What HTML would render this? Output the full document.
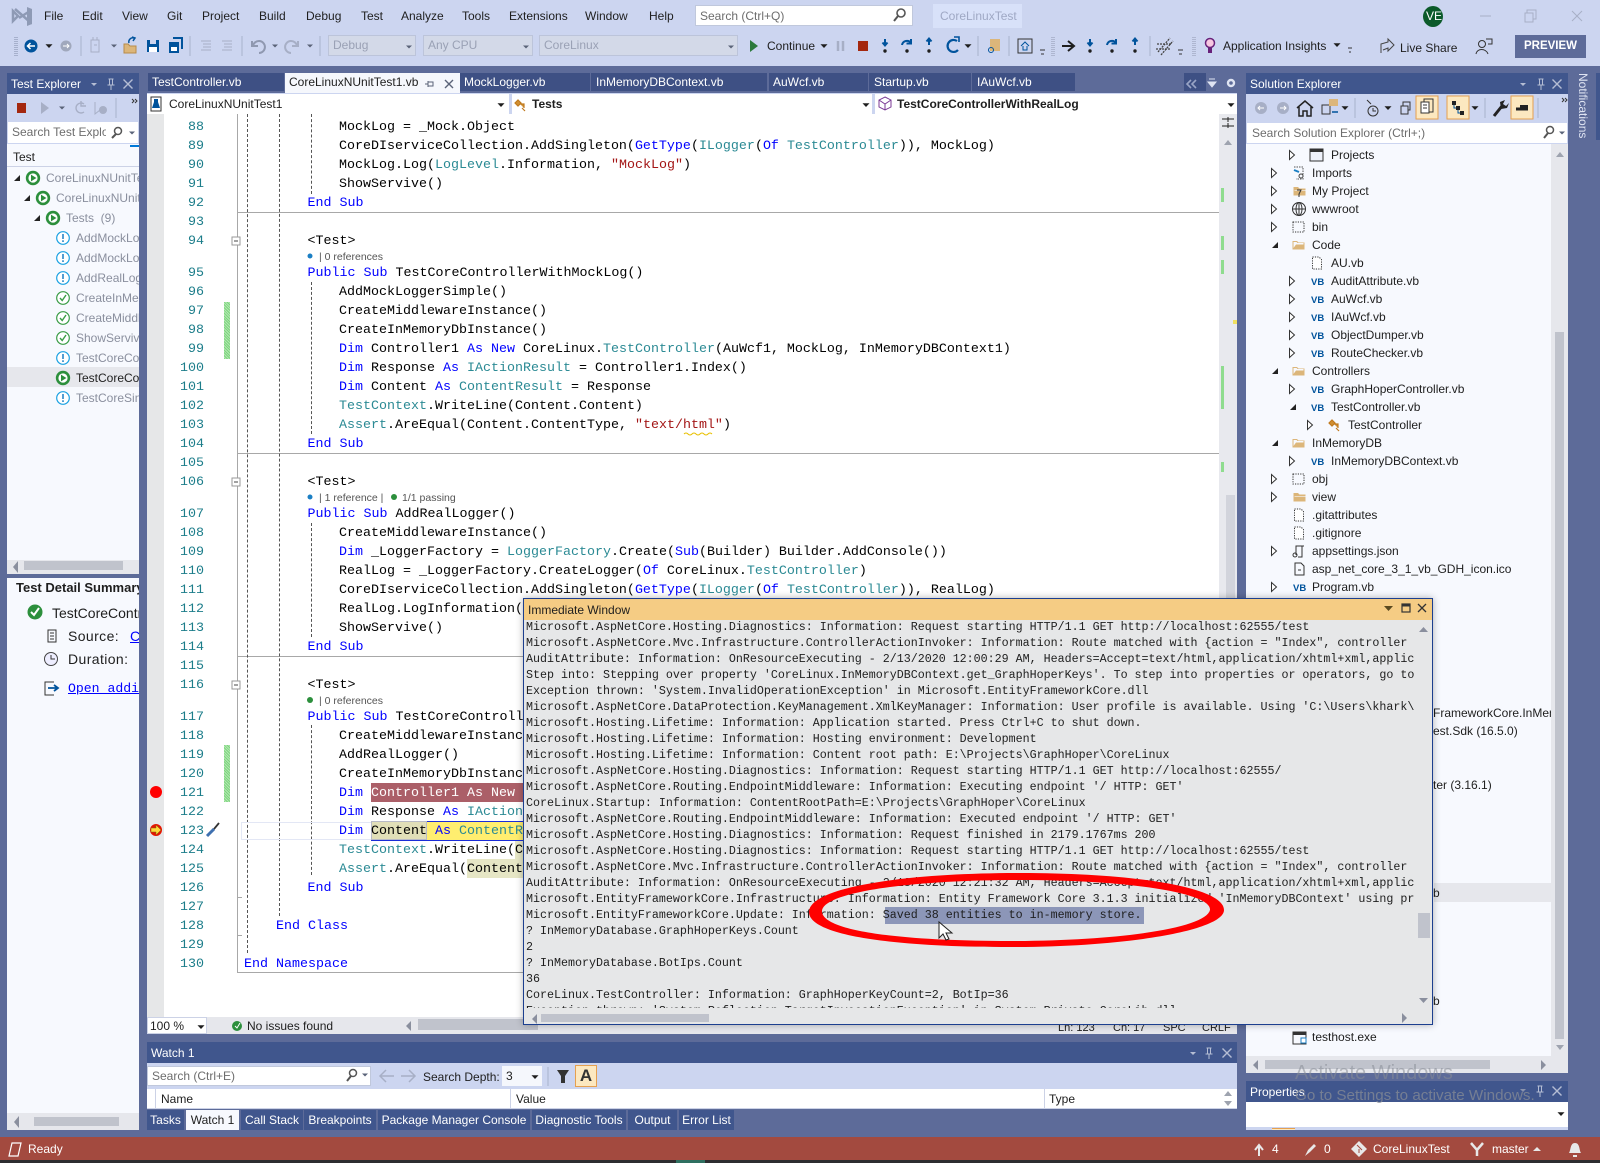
<!DOCTYPE html>
<html>
<head>
<meta charset="utf-8">
<title>CoreLinuxTest - Visual Studio</title>
<style>
html,body{margin:0;padding:0}
body{position:relative;width:1600px;height:1163px;overflow:hidden;background:#5d6b99;font:12px "Liberation Sans",sans-serif;color:#1e1e1e}
.a{position:absolute}
.t{position:absolute;white-space:pre;font:12px/16px "Liberation Sans",sans-serif;color:#1e1e1e}
.w{color:#fff}
.g{color:#8a8f9e}
.tab{position:absolute;top:73px;height:18px;background:#3e5084}
.c{position:absolute;white-space:pre;font:13.33px/19px "Liberation Mono",monospace;color:#000}
.n{position:absolute;left:164px;width:40px;text-align:right;font:13.33px/19px "Liberation Mono",monospace;color:#1c7d8a}
.x1{left:244px}.x2{left:276px}.x3{left:307.5px}.x4{left:339px}
.c b{font-weight:normal;color:#0000ff}
.c i{font-style:normal;color:#2b8a94}
.c u{text-decoration:none;color:#a31515}
.lens{position:absolute;white-space:pre;font:10.5px/12px "Liberation Sans",sans-serif;color:#555}
.clip{position:absolute;overflow:hidden}
.dd{position:absolute;top:35px;height:21px;background:#d3d9e8;border:1px solid #bcc4da;box-sizing:border-box;color:#9aa1b5;padding:2px 0 0 4px;line-height:15px}
.btab{position:absolute;top:1110px;height:20px;background:#40568d;color:#fff;font:12px/20px "Liberation Sans",sans-serif;text-align:center;white-space:pre}
.gb{position:absolute;left:224px;width:6px;background:repeating-linear-gradient(45deg,#7fd47f 0 1px,#b0e8b0 1px 2px)}
</style>
</head>
<body>
<!-- top chrome -->
<div class="a" style="left:0;top:0;width:1600px;height:66px;background:#ccd5f0"></div>
<div class="t" style="left:44px;top:8px">File</div>
<div class="t" style="left:82px;top:8px">Edit</div>
<div class="t" style="left:122px;top:8px">View</div>
<div class="t" style="left:167px;top:8px">Git</div>
<div class="t" style="left:202px;top:8px">Project</div>
<div class="t" style="left:259px;top:8px">Build</div>
<div class="t" style="left:306px;top:8px">Debug</div>
<div class="t" style="left:361px;top:8px">Test</div>
<div class="t" style="left:401px;top:8px">Analyze</div>
<div class="t" style="left:462px;top:8px">Tools</div>
<div class="t" style="left:509px;top:8px">Extensions</div>
<div class="t" style="left:585px;top:8px">Window</div>
<div class="t" style="left:649px;top:8px">Help</div>
<div class="a" style="left:695px;top:5px;width:218px;height:21px;background:#fff;border:1px solid #c0c8dc;box-sizing:border-box"></div>
<div class="t" style="left:700px;top:8px;color:#6d6d6d">Search (Ctrl+Q)</div>
<div class="a" style="left:933px;top:4px;width:89px;height:24px;background:#d8e1f9"></div>
<div class="t" style="left:940px;top:8px;color:#9fa8c4">CoreLinuxTest</div>
<div class="a" style="left:1423px;top:6px;width:20px;height:21px;border-radius:50%;background:#0b5a2a"></div>
<div class="t w" style="left:1426px;top:8px">VE</div>
<div class="dd" style="left:328px;width:88px">Debug</div>
<div class="dd" style="left:423px;width:110px">Any CPU</div>
<div class="dd" style="left:539px;width:199px">CoreLinux</div>
<div class="t" style="left:767px;top:38px">Continue</div>
<div class="t" style="left:1223px;top:38px">Application Insights</div>
<div class="t" style="left:1400px;top:40px">Live Share</div>
<div class="a" style="left:1515px;top:35px;width:71px;height:23px;background:#5d6b99;color:#fff;font:bold 11.5px/23px 'Liberation Sans',sans-serif;text-align:center">PREVIEW</div>

<!-- test explorer -->
<div class="a" style="left:7px;top:73px;width:132px;height:21px;background:#40568d"></div>
<div class="t w" style="left:11px;top:76px">Test Explorer</div>
<div class="a" style="left:7px;top:94px;width:132px;height:28px;background:#ccd5f0"></div>
<div class="a" style="left:7px;top:122px;width:132px;height:22px;background:#ccd5f0"></div>
<div class="a" style="left:8px;top:122px;width:130px;height:21px;background:#fff"></div>
<div class="t" style="left:12px;top:124px;color:#6d6d6d;width:94px;overflow:hidden">Search Test Explor</div>
<div class="a" style="left:7px;top:144px;width:132px;height:416px;background:#f7f9fe"></div>
<div class="a" style="left:130px;top:145px;width:9px;height:2px;background:#0078d7"></div>
<div class="a" style="left:7px;top:166px;width:132px;height:1px;background:#ccd2e6"></div>
<div class="t" style="left:13px;top:149px">Test</div>
<div class="a" style="left:7px;top:367px;width:132px;height:20px;background:#e6e7ec"></div>
<div class="clip" style="left:7px;top:144px;width:132px;height:416px">
<div class="t g" style="left:39px;top:26px">CoreLinuxNUnitTest1</div>
<div class="t g" style="left:49px;top:46px">CoreLinuxNUnitTest1</div>
<div class="t g" style="left:59px;top:66px">Tests  (9)</div>
<div class="t g" style="left:69px;top:86px">AddMockLoggerSimple</div>
<div class="t g" style="left:69px;top:106px">AddMockLogger</div>
<div class="t g" style="left:69px;top:126px">AddRealLogger</div>
<div class="t g" style="left:69px;top:146px">CreateInMemoryDb</div>
<div class="t g" style="left:69px;top:166px">CreateMiddleware</div>
<div class="t g" style="left:69px;top:186px">ShowServive</div>
<div class="t g" style="left:69px;top:206px">TestCoreController</div>
<div class="t" style="left:69px;top:226px">TestCoreController</div>
<div class="t g" style="left:69px;top:246px">TestCoreSingleton</div>
</div>
<div class="a" style="left:7px;top:560px;width:132px;height:14px;background:#e6e7ec"></div>
<div class="a" style="left:24px;top:561px;width:99px;height:9px;background:#c0c3cc"></div>
<div class="a" style="left:7px;top:578px;width:132px;height:552px;background:#f7f9fe"></div>
<div class="clip" style="left:7px;top:578px;width:132px;height:130px">
<div class="t" style="left:9px;top:2px;font:bold 13px/16px 'Liberation Sans',sans-serif">Test Detail Summary</div>
<div class="t" style="left:45px;top:27px;font:14px/16px 'Liberation Sans',sans-serif">TestCoreController</div>
<div class="t" style="left:61px;top:50px;font:14px/16px 'Liberation Sans',sans-serif;letter-spacing:.4px">Source:</div>
<div class="t" style="left:123px;top:50px;font:14px/16px 'Liberation Sans',sans-serif;color:#00f;text-decoration:underline">CoreLinux</div>
<div class="t" style="left:61px;top:73px;font:14px/16px 'Liberation Sans',sans-serif;letter-spacing:.4px">Duration:</div>
<div class="t" style="left:61px;top:103px;font:13.17px/16px 'Liberation Mono',monospace;color:#00f;text-decoration:underline">Open additional output</div>
</div>
<div class="a" style="left:7px;top:1113px;width:132px;height:17px;background:#e6e7ec"></div>
<div class="a" style="left:34px;top:1117px;width:85px;height:9px;background:#c0c3cc"></div>

<!-- tabs -->
<div class="tab" style="left:148px;width:136px"></div>
<div class="a" style="left:285px;top:73px;width:175px;height:20px;background:#f5f7fc"></div>
<div class="tab" style="left:460px;width:130px"></div>
<div class="tab" style="left:591px;width:176px"></div>
<div class="tab" style="left:769px;width:99px"></div>
<div class="tab" style="left:869px;width:102px"></div>
<div class="tab" style="left:972px;width:103px"></div>
<div class="tab" style="left:1184px;width:22px"></div>
<div class="t w" style="left:152px;top:74px">TestController.vb</div>
<div class="t" style="left:289px;top:74px">CoreLinuxNUnitTest1.vb</div>
<div class="t w" style="left:464px;top:74px">MockLogger.vb</div>
<div class="t w" style="left:596px;top:74px">InMemoryDBContext.vb</div>
<div class="t w" style="left:773px;top:74px">AuWcf.vb</div>
<div class="t w" style="left:874px;top:74px">Startup.vb</div>
<div class="t w" style="left:977px;top:74px">IAuWcf.vb</div>

<!-- nav bar -->
<div class="a" style="left:147px;top:93px;width:1090px;height:21px;background:#ccd5f0"></div>
<div class="a" style="left:147px;top:94px;width:362px;height:20px;background:#fff"></div>
<div class="a" style="left:512px;top:94px;width:360px;height:20px;background:#fff"></div>
<div class="a" style="left:875px;top:94px;width:362px;height:20px;background:#fff"></div>
<div class="t" style="left:169px;top:96px">CoreLinuxNUnitTest1</div>
<div class="t" style="left:532px;top:96px;font-weight:bold">Tests</div>
<div class="t" style="left:897px;top:96px;font-weight:bold">TestCoreControllerWithRealLog</div>

<!-- editor -->
<div class="a" style="left:147px;top:114px;width:17px;height:903px;background:#e6e7e8"></div>
<div class="a" style="left:164px;top:114px;width:1055px;height:903px;background:#fff"></div>
<div class="a" style="left:1219px;top:114px;width:18px;height:903px;background:#e8e9ee"></div>
<div class="a" style="left:1226px;top:495px;width:9px;height:105px;background:#d2d4dc"></div>
<div class="gb" style="top:302px;height:57px"></div>
<div class="gb" style="top:745px;height:57px"></div>
<div class="a" style="left:1221px;top:188px;width:3px;height:14px;background:#8fdc8f"></div>
<div class="a" style="left:1221px;top:236px;width:3px;height:14px;background:#8fdc8f"></div>
<div class="a" style="left:1221px;top:260px;width:3px;height:14px;background:#8fdc8f"></div>
<div class="a" style="left:1221px;top:366px;width:3px;height:43px;background:#8fdc8f"></div>
<div class="a" style="left:1221px;top:462px;width:3px;height:10px;background:#8fdc8f"></div>
<div class="a" style="left:1233px;top:320px;width:4px;height:4px;background:#f0e060"></div>

<div class="a" style="left:237px;top:114px;width:1px;height:858px;background:#a8a8a8"></div>
<div class="a" style="left:237px;top:972px;width:290px;height:1px;background:#a8a8a8"></div>
<div class="a" style="left:237px;top:212px;width:982px;height:1px;background:#a8a8a8"></div>
<div class="a" style="left:237px;top:453px;width:982px;height:1px;background:#a8a8a8"></div>
<div class="a" style="left:237px;top:656px;width:982px;height:1px;background:#a8a8a8"></div>
<div class="a" style="left:238px;top:897px;width:4px;height:1px;background:#a8a8a8"></div>
<div class="a" style="left:238px;top:935px;width:4px;height:1px;background:#a8a8a8"></div>
<div class="a" style="left:247px;top:114px;height:839px;border-left:1px dashed #555"></div>
<div class="a" style="left:279px;top:114px;height:802px;border-left:1px dashed #555"></div>
<div class="a" style="left:311px;top:114px;height:80px;border-left:1px dashed #555"></div>
<div class="a" style="left:311px;top:282px;height:152px;border-left:1px dashed #555"></div>
<div class="a" style="left:311px;top:523px;height:114px;border-left:1px dashed #555"></div>
<div class="a" style="left:311px;top:725px;height:150px;border-left:1px dashed #555"></div>

<div class="a" style="left:371px;top:783px;width:152px;height:19px;background:#ab5f68"></div>
<div class="a" style="left:241px;top:822px;width:282px;height:18px;border:1px solid #e3e7f5;box-sizing:border-box"></div>
<div class="a" style="left:371px;top:821px;width:152px;height:20px;background:#ffee6f"></div>
<div class="a" style="left:427px;top:821px;width:96px;height:1px;background:#1a2cd8"></div>
<div class="a" style="left:371px;top:840px;width:152px;height:1px;background:#1a2cd8"></div>
<div class="a" style="left:371px;top:821px;width:56px;height:19px;background:#e1dfb8;border:1px solid #b8bac6;box-sizing:border-box"></div>
<div class="a" style="left:515px;top:841px;width:8px;height:18px;background:#e6e6c5"></div>
<div class="a" style="left:467px;top:859px;width:56px;height:19px;background:#e6e6c5"></div>

<div class="a" style="left:0;top:1px">
<div class="n" style="top:117px">88</div><div class="n" style="top:136px">89</div><div class="n" style="top:155px">90</div><div class="n" style="top:174px">91</div><div class="n" style="top:193px">92</div><div class="n" style="top:212px">93</div><div class="n" style="top:231px">94</div>
<div class="n" style="top:263px">95</div><div class="n" style="top:282px">96</div><div class="n" style="top:301px">97</div><div class="n" style="top:320px">98</div><div class="n" style="top:339px">99</div><div class="n" style="top:358px">100</div><div class="n" style="top:377px">101</div><div class="n" style="top:396px">102</div><div class="n" style="top:415px">103</div><div class="n" style="top:434px">104</div><div class="n" style="top:453px">105</div><div class="n" style="top:472px">106</div>
<div class="n" style="top:504px">107</div><div class="n" style="top:523px">108</div><div class="n" style="top:542px">109</div><div class="n" style="top:561px">110</div><div class="n" style="top:580px">111</div><div class="n" style="top:599px">112</div><div class="n" style="top:618px">113</div><div class="n" style="top:637px">114</div><div class="n" style="top:656px">115</div><div class="n" style="top:675px">116</div>

<div class="c x4" style="top:117px">MockLog = _Mock.Object</div>
<div class="c x4" style="top:136px">CoreDIserviceCollection.AddSingleton(<b>GetType</b>(<i>ILogger</i>(<b>Of</b> <i>TestController</i>)), MockLog)</div>
<div class="c x4" style="top:155px">MockLog.Log(<i>LogLevel</i>.Information, <u>"MockLog"</u>)</div>
<div class="c x4" style="top:174px">ShowServive()</div>
<div class="c x3" style="top:193px"><b>End Sub</b></div>
<div class="c x3" style="top:231px">&lt;Test&gt;</div>
<div class="c x3" style="top:263px"><b>Public Sub</b> TestCoreControllerWithMockLog()</div>
<div class="c x4" style="top:282px">AddMockLoggerSimple()</div>
<div class="c x4" style="top:301px">CreateMiddlewareInstance()</div>
<div class="c x4" style="top:320px">CreateInMemoryDbInstance()</div>
<div class="c x4" style="top:339px"><b>Dim</b> Controller1 <b>As New</b> CoreLinux.<i>TestController</i>(AuWcf1, MockLog, InMemoryDBContext1)</div>
<div class="c x4" style="top:358px"><b>Dim</b> Response <b>As</b> <i>IActionResult</i> = Controller1.Index()</div>
<div class="c x4" style="top:377px"><b>Dim</b> Content <b>As</b> <i>ContentResult</i> = Response</div>
<div class="c x4" style="top:396px"><i>TestContext</i>.WriteLine(Content.Content)</div>
<div class="c x4" style="top:415px"><i>Assert</i>.AreEqual(Content.ContentType, <u>"text/html"</u>)</div>
<div class="c x3" style="top:434px"><b>End Sub</b></div>
<div class="c x3" style="top:472px">&lt;Test&gt;</div>
<div class="c x3" style="top:504px"><b>Public Sub</b> AddRealLogger()</div>
<div class="c x4" style="top:523px">CreateMiddlewareInstance()</div>
<div class="c x4" style="top:542px"><b>Dim</b> _LoggerFactory = <i>LoggerFactory</i>.Create(<b>Sub</b>(Builder) Builder.AddConsole())</div>
<div class="c x4" style="top:561px">RealLog = _LoggerFactory.CreateLogger(<b>Of</b> CoreLinux.<i>TestController</i>)</div>
<div class="c x4" style="top:580px">CoreDIserviceCollection.AddSingleton(<b>GetType</b>(<i>ILogger</i>(<b>Of</b> <i>TestController</i>)), RealLog)</div>
<div class="c x4" style="top:599px">RealLog.LogInformation(</div>
<div class="c x4" style="top:618px">ShowServive()</div>
<div class="c x3" style="top:637px"><b>End Sub</b></div>
<div class="c x3" style="top:675px">&lt;Test&gt;</div>
</div>

<div class="a" style="left:0;top:2px">
<div class="n" style="top:706px">117</div><div class="n" style="top:725px">118</div><div class="n" style="top:744px">119</div><div class="n" style="top:763px">120</div><div class="n" style="top:782px">121</div><div class="n" style="top:801px">122</div><div class="n" style="top:820px">123</div><div class="n" style="top:839px">124</div><div class="n" style="top:858px">125</div><div class="n" style="top:877px">126</div><div class="n" style="top:896px">127</div><div class="n" style="top:915px">128</div><div class="n" style="top:934px">129</div><div class="n" style="top:953px">130</div>
<div class="c x3" style="top:706px"><b>Public Sub</b> TestCoreControllerWithRealLog()</div>
<div class="c x4" style="top:725px">CreateMiddlewareInstance()</div>
<div class="c x4" style="top:744px">AddRealLogger()</div>
<div class="c x4" style="top:763px">CreateInMemoryDbInstance()</div>
<div class="c x4" style="top:782px"><b>Dim</b> <span style="color:#fff">Controller1 As New</span></div>
<div class="c x4" style="top:801px"><b>Dim</b> Response <b>As</b> <i>IActionResult</i></div>
<div class="c x4" style="top:820px"><b>Dim</b> Content <b>As</b> <i>ContentResult</i></div>
<div class="c x4" style="top:839px"><i>TestContext</i>.WriteLine(Content.Content)</div>
<div class="c x4" style="top:858px"><i>Assert</i>.AreEqual(Content.ContentType</div>
<div class="c x3" style="top:877px"><b>End Sub</b></div>
<div class="c x2" style="top:915px"><b>End Class</b></div>
<div class="c x1" style="top:953px"><b>End Namespace</b></div>
</div>

<div class="lens" style="left:319px;top:251px">| 0 references</div>
<div class="lens" style="left:319px;top:492px">| 1 reference |</div>
<div class="lens" style="left:402px;top:492px">1/1 passing</div>
<div class="lens" style="left:319px;top:695px">| 0 references</div>

<!-- editor status -->
<div class="a" style="left:147px;top:1017px;width:1090px;height:17px;background:#e6e7ec"></div>
<div class="a" style="left:147px;top:1017px;width:60px;height:17px;background:#fff;border:1px solid #ccd2e6;box-sizing:border-box"></div>
<div class="t" style="left:150px;top:1018px">100 %</div>
<div class="t" style="left:247px;top:1018px">No issues found</div>
<div class="a" style="left:418px;top:1019px;width:120px;height:11px;background:#c0c3cc"></div>
<div class="t" style="left:1058px;top:1020px;font-size:11px">Ln: 123</div>
<div class="t" style="left:1113px;top:1020px;font-size:11px">Ch: 17</div>
<div class="t" style="left:1163px;top:1020px;font-size:11px">SPC</div>
<div class="t" style="left:1202px;top:1020px;font-size:11px">CRLF</div>

<!-- watch -->
<div class="a" style="left:147px;top:1042px;width:1090px;height:21px;background:#40568d"></div>
<div class="t w" style="left:151px;top:1045px">Watch 1</div>
<div class="a" style="left:147px;top:1063px;width:1090px;height:26px;background:#ccd5f0"></div>
<div class="a" style="left:147px;top:1066px;width:224px;height:20px;background:#fff;border:1px solid #c0c8dc;box-sizing:border-box"></div>
<div class="t" style="left:152px;top:1068px;color:#6d6d6d">Search (Ctrl+E)</div>
<div class="t" style="left:423px;top:1069px">Search Depth:</div>
<div class="a" style="left:502px;top:1066px;width:40px;height:20px;background:#f5f7fc"></div>
<div class="t" style="left:506px;top:1068px">3</div>
<div class="a" style="left:575px;top:1065px;width:22px;height:22px;background:#fce8c0;border:1px solid #e5a050;box-sizing:border-box;text-align:center;font:bold 17px/20px 'Liberation Sans',sans-serif;color:#333">A</div>
<div class="a" style="left:147px;top:1089px;width:1090px;height:20px;background:#fff"></div>
<div class="a" style="left:155px;top:1089px;width:1px;height:20px;background:#ccd2e6"></div>
<div class="a" style="left:510px;top:1089px;width:1px;height:20px;background:#ccd2e6"></div>
<div class="a" style="left:1044px;top:1089px;width:1px;height:20px;background:#ccd2e6"></div>
<div class="a" style="left:147px;top:1108px;width:1090px;height:1px;background:#ccd2e6"></div>
<div class="t" style="left:161px;top:1091px">Name</div>
<div class="t" style="left:516px;top:1091px">Value</div>
<div class="t" style="left:1049px;top:1091px">Type</div>
<div class="btab" style="left:147px;width:37px">Tasks</div>
<div class="btab" style="left:186px;width:53px;background:#f7f9fe;color:#1e1e1e">Watch 1</div>
<div class="btab" style="left:241px;width:62px">Call Stack</div>
<div class="btab" style="left:304px;width:72px">Breakpoints</div>
<div class="btab" style="left:378px;width:152px">Package Manager Console</div>
<div class="btab" style="left:532px;width:94px">Diagnostic Tools</div>
<div class="btab" style="left:628px;width:49px">Output</div>
<div class="btab" style="left:679px;width:55px">Error List</div>

<!-- solution explorer -->
<div class="a" style="left:1246px;top:73px;width:322px;height:21px;background:#40568d"></div>
<div class="t w" style="left:1250px;top:76px">Solution Explorer</div>
<div class="a" style="left:1246px;top:94px;width:322px;height:29px;background:#ccd5f0"></div>
<div class="a" style="left:1246px;top:123px;width:322px;height:21px;background:#ccd5f0"></div>
<div class="a" style="left:1247px;top:123px;width:320px;height:20px;background:#fff"></div>
<div class="t" style="left:1252px;top:125px;color:#6d6d6d">Search Solution Explorer (Ctrl+;)</div>
<div class="a" style="left:1246px;top:144px;width:305px;height:912px;background:#f7f9fe"></div>
<div class="a" style="left:1551px;top:144px;width:17px;height:929px;background:#e6e7ec"></div>
<div class="a" style="left:1555px;top:332px;width:9px;height:707px;background:#c0c3cc"></div>
<div class="a" style="left:1246px;top:1056px;width:322px;height:17px;background:#e6e7ec"></div>
<div class="a" style="left:1265px;top:1060px;width:225px;height:9px;background:#c0c3cc"></div>
<div class="a" style="left:1434px;top:883px;width:117px;height:19px;background:#e6e7ec"></div>
<div class="t" style="left:1331px;top:147px">Projects</div>
<div class="t" style="left:1312px;top:165px">Imports</div>
<div class="t" style="left:1312px;top:183px">My Project</div>
<div class="t" style="left:1312px;top:201px">wwwroot</div>
<div class="t" style="left:1312px;top:219px">bin</div>
<div class="t" style="left:1312px;top:237px">Code</div>
<div class="t" style="left:1331px;top:255px">AU.vb</div>
<div class="t" style="left:1331px;top:273px">AuditAttribute.vb</div>
<div class="t" style="left:1331px;top:291px">AuWcf.vb</div>
<div class="t" style="left:1331px;top:309px">IAuWcf.vb</div>
<div class="t" style="left:1331px;top:327px">ObjectDumper.vb</div>
<div class="t" style="left:1331px;top:345px">RouteChecker.vb</div>
<div class="t" style="left:1312px;top:363px">Controllers</div>
<div class="t" style="left:1331px;top:381px">GraphHoperController.vb</div>
<div class="t" style="left:1331px;top:399px">TestController.vb</div>
<div class="t" style="left:1348px;top:417px">TestController</div>
<div class="t" style="left:1312px;top:435px">InMemoryDB</div>
<div class="t" style="left:1331px;top:453px">InMemoryDBContext.vb</div>
<div class="t" style="left:1312px;top:471px">obj</div>
<div class="t" style="left:1312px;top:489px">view</div>
<div class="t" style="left:1312px;top:507px">.gitattributes</div>
<div class="t" style="left:1312px;top:525px">.gitignore</div>
<div class="t" style="left:1312px;top:543px">appsettings.json</div>
<div class="t" style="left:1312px;top:561px">asp_net_core_3_1_vb_GDH_icon.ico</div>
<div class="t" style="left:1312px;top:579px">Program.vb</div>
<div class="clip" style="left:1433px;top:700px;width:118px;height:100px">
<div class="t" style="left:0;top:5px">FrameworkCore.InMemory</div>
<div class="t" style="left:0;top:23px">est.Sdk (16.5.0)</div>
<div class="t" style="left:0;top:77px">ter (3.16.1)</div>
</div>
<div class="t" style="left:1433px;top:885px">b</div>
<div class="t" style="left:1433px;top:993px">b</div>
<div class="t" style="left:1312px;top:1029px">testhost.exe</div>
<div class="a" style="left:1246px;top:1081px;width:322px;height:21px;background:#40568d"></div>
<div class="t w" style="left:1250px;top:1084px">Properties</div>
<div class="a" style="left:1246px;top:1102px;width:322px;height:25px;background:#fff"></div>
<div class="a" style="left:1246px;top:1127px;width:322px;height:3px;background:#ccd5f0"></div>
<div class="a" style="left:1272px;top:1128px;width:23px;height:2px;background:#fce8c0;border-top:1px solid #e5a050;box-sizing:border-box"></div>
<div class="t" style="left:1577px;top:107px;transform-origin:0 0;transform:translate(0,-34px) rotate(90deg) translate(0,-14px);color:#dfe4f2">Notifications</div>
<div class="a" style="left:1596px;top:73px;width:4px;height:67px;background:#40568d"></div>

<!-- status bar -->
<div class="a" style="left:0;top:1137px;width:1600px;height:23px;background:#a34a3f"></div>
<div class="a" style="left:0;top:1160px;width:1600px;height:3px;background:#2d2d30"></div>
<div class="a" style="left:676px;top:1160px;width:29px;height:3px;background:#2f6f60"></div>
<div class="t w" style="left:28px;top:1141px">Ready</div>
<div class="t w" style="left:1272px;top:1141px">4</div>
<div class="t w" style="left:1324px;top:1141px">0</div>
<div class="t w" style="left:1373px;top:1141px">CoreLinuxTest</div>
<div class="t w" style="left:1492px;top:1141px">master</div>

<!-- icons -->
<svg class="a" style="left:0;top:0" width="1600" height="1163" viewBox="0 0 1600 1163" xmlns="http://www.w3.org/2000/svg">
<defs>
<g id="pg"><circle r="7.2" fill="#2c8f3c"/><circle r="4.6" fill="#fff"/><path d="M-2-3.4L3.4 0-2 3.4Z" fill="#2c8f3c"/></g>
<g id="inf"><circle r="6.3" fill="#fff" stroke="#1ba1e2" stroke-width="1.2"/><path d="M0-4V1M0 2.2V4" stroke="#1b7fc4" stroke-width="1.5"/></g>
<g id="ok"><circle r="6.3" fill="#fff" stroke="#3a9c46" stroke-width="1.2"/><path d="M-3 0L-.8 2.5 3-3" fill="none" stroke="#3a9c46" stroke-width="1.4"/></g>
<path id="ex" d="M-2.5-4.5L2.5 0-2.5 4.5Z" fill="#fff" stroke="#333" stroke-width="1"/>
<path id="ed" d="M3-3V3H-3Z" fill="#222"/>
<g id="fo"><path d="M-6.500-4H-2L-.5-2.500H5.500V4.500H-6.500Z" fill="#dcb67a"/><path d="M-5.500-.5H5.500" stroke="#f7f9fe" stroke-width="1" opacity=".6"/></g>
<g id="fop"><path d="M-6.500-4H-2L-.5-2.500H5.500V4.500H-6.500Z" fill="#dcb67a"/><path d="M-5.500-3H-2.500L-1.500-2H4.500V-.5H-3L-5.500 3Z" fill="#f7f9fe"/></g>
<rect id="fd" x="-6" y="-5" width="11" height="10" fill="none" stroke="#333" stroke-dasharray="1.200 1.200"/>
<path id="fl" d="M-4.500-6H2L4.500-3.500V6H-4.500Z" fill="#fff" stroke="#333" stroke-dasharray="1.200 1.200"/>
<g id="cl"><path d="M-5-1L-2-4 1-1-2 2ZM0 0H4V4M2 4L5 7" fill="#d08f33" stroke="#c07a1e" stroke-width="1.200"/></g>
<path id="cd" d="M-3.500-1.800H3.500L0 2Z" fill="#1e1e1e"/>
<path id="cg" d="M-3-1.500H3L0 1.500Z" fill="#5a6378"/>
<g id="pin"><path d="M-2.500-5H2.500M-1.500-5V1M1.500-5V1M-3.500 1H3.500M0 1V6" stroke="#b5bdd4" fill="none" stroke-width="1"/></g>
<path id="xx" d="M-4.500-4.500L4.500 4.500M4.500-4.500L-4.500 4.500" stroke="#b5bdd4" stroke-width="1.400"/>
<g id="step"><path d="M0-7V-1M-2.500-3.500L0-.5 2.500-3.500" fill="none" stroke="#00539c" stroke-width="2"/><circle cy="5" r="1.700" fill="#1e1e1e"/></g>
<g id="over"><path d="M-5-1A5 5 0 0 1 4-3M4-7V-2.500H-.5" fill="none" stroke="#00539c" stroke-width="2"/><circle cy="5" r="1.700" fill="#1e1e1e"/></g>
<g id="out"><path d="M0-1V-7M-2.500-4.500L0-7.500 2.500-4.500" fill="none" stroke="#00539c" stroke-width="2"/><circle cy="5" r="1.700" fill="#1e1e1e"/></g>
</defs>

<!-- logo -->
<path d="M13 11L18 16 13 21ZM15 9L30 22V11L19 18" fill="none" stroke="#8e9ab5" stroke-width="2.500"/>
<path d="M27 7L32 9V24L27 26Z" fill="#8e9ab5"/>
<circle cx="901" cy="13" r="4" fill="none" stroke="#555" stroke-width="1.600"/><path d="M898 16L894 21" stroke="#555" stroke-width="2"/>
<!-- window controls -->
<path d="M1480 16H1491" stroke="#a7afc6"/><rect x="1525" y="13" width="8" height="9" fill="none" stroke="#a7afc6"/><path d="M1527 13V10H1536V19H1533" fill="none" stroke="#a7afc6"/><path d="M1572 11L1582 21M1582 11L1572 21" stroke="#a7afc6"/>

<!-- toolbar row -->
<path d="M15 37V56M17 37V56" stroke="#7f8aa8" stroke-dasharray="1 1"/>
<circle cx="31" cy="46" r="6.500" fill="#00539c"/><path d="M35 46H28M30.500 43L27.500 46 30.500 49" fill="none" stroke="#fff" stroke-width="1.500"/>
<use href="#cd" x="49" y="46"/>
<circle cx="66" cy="46" r="5.500" fill="#a0a8bc"/><path d="M63 46H69M67 44L69 46 67 48" fill="none" stroke="#fff"/>
<path d="M81 36V56M190 36V56M242 36V56M320 36V56" stroke="#a9b2cb"/>
<path d="M91 40H99V52H91Z" fill="none" stroke="#a7afc6"/><path d="M93 37V40M97 37V40M94 45H97" stroke="#a7afc6"/><use href="#cg" x="114" y="46"/>
<path d="M124 44H128L130 46H136V53H124Z" fill="#dcb67a" stroke="#b78c4a"/><path d="M129 43A4 4 0 0 1 134 38M132 37L135 38 133 41" fill="none" stroke="#00539c" stroke-width="1.500"/>
<path d="M147 40H159V52H147Z" fill="#00539c"/><rect x="150" y="40" width="6" height="4" fill="#ccd5f0"/><rect x="149" y="47" width="8" height="5" fill="#fff"/>
<path d="M169 42H179V53H169Z" fill="#00539c"/><path d="M173 38H182V49" fill="none" stroke="#00539c" stroke-width="2"/><rect x="171" y="47" width="6" height="4" fill="#fff"/>
<path d="M201 41H211M203 44H211M203 47H211M201 50H211M222 41H232M224 44H232M224 47H232M222 50H232" stroke="#a7afc6"/>
<path d="M252 41V46H258M253 46A6 6 0 1 1 259 53" fill="none" stroke="#8f98b0" stroke-width="2"/><use href="#cg" x="275" y="46"/>
<path d="M298 41V46H292M297 46A6 6 0 1 0 291 53" fill="none" stroke="#a7afc6" stroke-width="2"/><use href="#cg" x="310" y="46"/>
<use href="#cg" x="409" y="47"/><use href="#cg" x="526" y="47"/><use href="#cg" x="731" y="47"/>
<path d="M750 40L758 46 750 52Z" fill="#2c7a3c"/>
<use href="#cd" x="824" y="46"/>
<path d="M838 41V51M843 41V51" stroke="#a7afc6" stroke-width="2.500"/>
<rect x="858" y="41" width="10" height="10" fill="#a4280f"/>
<use href="#step" x="885" y="46"/><use href="#over" x="907" y="46"/><use href="#out" x="929" y="46"/>
<path d="M957 41A6 6 0 1 0 958 50" fill="none" stroke="#00539c" stroke-width="2.200"/><path d="M954 37H959V42" fill="none" stroke="#00539c" stroke-width="1.600"/><use href="#cd" x="968" y="46"/>
<path d="M978 36V56M1009 36V56M1150 36V56" stroke="#a9b2cb"/>
<rect x="990" y="39" width="10" height="12" fill="#dcb67a"/><circle cx="991" cy="50" r="2.500" fill="none" stroke="#00539c"/>
<rect x="1018" y="39" width="14" height="14" fill="none" stroke="#333"/><path d="M1021 46L1025 42 1029 46M1023 46V50H1027V46" fill="none" stroke="#00539c"/>
<path d="M1040 50H1045M1041 54H1044" stroke="#333"/><path d="M1052 37V56M1054 37V56M1193 37V56M1195 37V56" stroke="#8f98b0" stroke-dasharray="1 1"/>
<path d="M1062 46H1073M1068 41L1074 46 1068 51" fill="none" stroke="#1e1e1e" stroke-width="2"/>
<use href="#step" x="1090" y="46"/><use href="#over" x="1112" y="46"/><use href="#out" x="1135" y="46"/>
<path d="M1158 52L1170 38M1161 55L1173 41M1157 44H1172M1156 49H1171" stroke="#444" stroke-width="1.300" stroke-dasharray="2 1"/>
<path d="M1178 50H1183M1179 54H1182" stroke="#333"/>
<circle cx="1210" cy="43" r="4.500" fill="#f7c7e0" stroke="#68217a" stroke-width="1.500"/><path d="M1208 48H1212V53H1208Z" fill="#68217a"/>
<use href="#cd" x="1337" y="45"/><path d="M1348 48H1352M1349 52H1351" stroke="#333"/>
<path d="M1381 53V44L1388 42V39L1394 45 1388 51V48L1383 50" fill="none" stroke="#444"/>
<circle cx="1482" cy="44" r="3.500" fill="none" stroke="#333"/><path d="M1476 54C1477 48 1486 48 1488 54" fill="none" stroke="#333"/><path d="M1486 39H1492V44H1488" fill="none" stroke="#333"/>

<!-- test explorer -->
<path d="M91 83H97L94 86Z" fill="#b5bdd4"/><use href="#pin" x="111" y="84"/><use href="#xx" x="128" y="84"/>
<rect x="17" y="103" width="9" height="10" fill="#a4280f"/>
<path d="M41 102L49 108 41 114Z" fill="#a7afc6"/><use href="#cg" x="62" y="108"/>
<path d="M84 104A5 5 0 1 0 84 112M81 101V106H86" fill="none" stroke="#a7afc6" stroke-width="1.400"/>
<path d="M95 102V114L100 110" fill="none" stroke="#a7afc6"/><circle cx="103" cy="110" r="4" fill="#a7afc6"/>
<path d="M116 98V118" stroke="#a9b2cb"/>
<path d="M132 99L134 101 132 103M135 99L137 101 135 103" stroke="#333" fill="none"/>
<circle cx="118" cy="131" r="3.500" fill="none" stroke="#555" stroke-width="1.500"/><path d="M116 134L112 138" stroke="#555" stroke-width="2"/><use href="#cg" x="132" y="133"/>
<use href="#ed" x="17" y="178"/><use href="#pg" x="33" y="178"/>
<use href="#ed" x="27" y="198"/><use href="#pg" x="43" y="198"/>
<use href="#ed" x="37" y="218"/><use href="#pg" x="53" y="218"/>
<use href="#inf" x="63" y="238"/><use href="#inf" x="63" y="258"/><use href="#inf" x="63" y="278"/>
<use href="#ok" x="63" y="298"/><use href="#ok" x="63" y="318"/><use href="#ok" x="63" y="338"/>
<use href="#inf" x="63" y="358"/><use href="#pg" x="63" y="378"/><use href="#inf" x="63" y="398"/>
<path d="M18 561L13 567 18 573Z" fill="#8a8f9e"/>
<circle cx="35" cy="612" r="7.500" fill="#2c8f3c"/><path d="M31 612L34 615 39 608" fill="none" stroke="#fff" stroke-width="2"/>
<path d="M48 630H56V642H48ZM50 633H54M50 636H54M50 639H54" fill="none" stroke="#333"/>
<circle cx="51" cy="659" r="6.500" fill="#eef" stroke="#444"/><path d="M51 655V659H55" fill="none" stroke="#333"/>
<path d="M54 682H45V695H54" fill="none" stroke="#333"/><path d="M48 688H57M54 685L58 688 54 691" stroke="#00539c" fill="none" stroke-width="1.800"/>
<path d="M19 1116L14 1122 19 1128Z" fill="#8a8f9e"/>

<!-- tabs row icons -->
<path d="M425 84H428M428 81V87M428 82H433V86H428" fill="none" stroke="#5a6378"/>
<path d="M445 80L453 88M453 80L445 88" stroke="#5a6378" stroke-width="1.400"/>
<path d="M1191 80L1187 84 1191 88M1196 80L1192 84 1196 88" fill="none" stroke="#9aa5c6" stroke-width="1.600"/>
<path d="M1209 79H1215M1208 82H1216L1212 87Z" fill="#dfe4f2" stroke="#dfe4f2"/>
<circle cx="1231" cy="83" r="3" fill="none" stroke="#dfe4f2" stroke-width="2.400"/>

<!-- nav icons -->
<path d="M151 97H161V111H151Z" fill="#fff" stroke="#333"/><path d="M154 99H158V102L160 108H152L154 102Z" fill="#00539c"/>
<use href="#cl" x="520" y="104"/>
<path d="M885 97L891 100V107L885 110 879 107V100Z" fill="#fff" stroke="#7b3a96"/><path d="M879 100L885 104 891 100M885 104V110" fill="none" stroke="#7b3a96"/>
<use href="#cd" x="501" y="105"/><use href="#cd" x="866" y="105"/><use href="#cd" x="1231" y="105"/>

<!-- editor icons -->
<rect x="232" y="237" width="8" height="8" fill="#fff" stroke="#999"/><path d="M234 241H238" stroke="#444"/>
<rect x="232" y="478" width="8" height="8" fill="#fff" stroke="#999"/><path d="M234 482H238" stroke="#444"/>
<rect x="232" y="681" width="8" height="8" fill="#fff" stroke="#999"/><path d="M234 685H238" stroke="#444"/>
<circle cx="156" cy="792" r="6" fill="#f00"/>
<circle cx="156" cy="830" r="6" fill="#e51400"/><path d="M151 828H156V825L161 830 156 835V832H151Z" fill="#ffd83a" stroke="#7a6a10" stroke-width=".5"/>
<path d="M207 836L214 829" stroke="#3e70b0" stroke-width="3"/><path d="M214 829L219 823" stroke="#333" stroke-width="1.800"/>
<path d="M1222 119H1234M1222 126H1234M1228 117V122M1228 123V128" stroke="#222"/>
<path d="M1224 145L1228 140 1232 145Z" fill="#9ea3af"/>
<circle cx="310" cy="256" r="2.500" fill="#1b7fc4"/><circle cx="310" cy="497" r="2.500" fill="#1b7fc4"/><circle cx="394" cy="497" r="3" fill="#2c8f3c"/><circle cx="310" cy="700" r="3" fill="#2c8f3c"/>
<path d="M684 434q2-2 4 0t4 0 4 0 4 0 4 0 4 0 4 0" fill="none" stroke="#e8c000" stroke-width="1"/>
<circle cx="237" cy="1026" r="5" fill="#2c8f3c"/><path d="M235 1026L237 1028 240 1023" stroke="#fff" fill="none"/>
<use href="#cd" x="201" y="1027"/>
<path d="M411 1021L406 1026 411 1031Z" fill="#8a8f9e"/>

<!-- watch icons -->
<path d="M1190 1052H1196L1193 1055Z" fill="#b5bdd4"/><use href="#pin" x="1209" y="1053"/><use href="#xx" x="1227" y="1053"/>
<circle cx="353" cy="1073" r="3.500" fill="none" stroke="#555" stroke-width="1.500"/><path d="M351 1076L347 1081" stroke="#555" stroke-width="2"/><use href="#cg" x="365" y="1075"/>
<path d="M394 1076H380M386 1070L380 1076 386 1082M401 1076H415M409 1070L415 1076 409 1082" fill="none" stroke="#a7afc6" stroke-width="1.500"/>
<use href="#cd" x="535" y="1077"/><path d="M548 1067V1086" stroke="#a9b2cb"/>
<path d="M557 1070H569L565 1076V1083H561V1076Z" fill="#333"/>
<path d="M1224 1096L1228 1091 1232 1096ZM1224 1101L1228 1106 1232 1101Z" fill="#9ea3af"/>

<!-- solution explorer icons -->
<path d="M1520 83H1526L1523 86Z" fill="#b5bdd4"/><use href="#pin" x="1541" y="84"/><use href="#xx" x="1557" y="84"/>
<circle cx="1261" cy="108" r="6" fill="#a7afc6"/><circle cx="1283" cy="108" r="6" fill="#a7afc6"/>
<path d="M1264 108H1258M1260 106L1258 108 1260 110M1280 108H1286M1284 106L1286 108 1284 110" stroke="#fff" fill="none"/>
<path d="M1297 108L1305 101 1313 108M1299 107V116H1303V111H1307V116H1311V107" fill="none" stroke="#222" stroke-width="1.500"/>
<rect x="1322" y="105" width="8" height="9" fill="none" stroke="#333"/><rect x="1329" y="99" width="9" height="7" fill="#dcb67a"/><path d="M1332 112H1338" stroke="#00539c" stroke-width="1.500"/>
<use href="#cd" x="1345" y="108"/>
<path d="M1355 98V118M1485 98V118M1538 98V118" stroke="#a9b2cb"/>
<circle cx="1373" cy="111" r="5" fill="none" stroke="#333"/><path d="M1373 108V111H1376M1367 100L1371 104" fill="none" stroke="#333"/>
<use href="#cd" x="1388" y="108"/>
<rect x="1401" y="106" width="7" height="8" fill="none" stroke="#333"/><path d="M1403 106V102H1410V110H1408" fill="none" stroke="#333"/>
<rect x="1416" y="96" width="22" height="23" fill="#fce8c0" stroke="#e5a050"/><rect x="1421" y="102" width="8" height="11" fill="#fff" stroke="#333"/><path d="M1424 102V99H1433V112H1429M1423 105H1427M1423 108H1427" fill="none" stroke="#333"/>
<rect x="1447" y="96" width="22" height="23" fill="#fce8c0" stroke="#e5a050"/><path d="M1452 101H1456V105H1452ZM1456 106H1460V110H1456ZM1460 111H1464V115H1460Z" fill="#222"/><path d="M1454 105V108H1456M1458 110V113H1460" stroke="#00539c" fill="none"/>
<use href="#cd" x="1475" y="108"/>
<path d="M1494 116L1502 106" stroke="#222" stroke-width="3"/><path d="M1500 102L1505 100 1503 104 1506 106 1509 103 1507 108 1501 109Z" fill="#222"/>
<rect x="1511" y="96" width="22" height="23" fill="#fce8c0" stroke="#e5a050"/><path d="M1516 109H1528" stroke="#222" stroke-width="3"/><rect x="1520" y="105" width="8" height="3" fill="#222"/>
<path d="M1562 98L1564 100 1562 102M1565 98L1567 100 1565 102" stroke="#333" fill="none"/>
<circle cx="1550" cy="130" r="3.500" fill="none" stroke="#555" stroke-width="1.500"/><path d="M1548 133L1544 138" stroke="#555" stroke-width="2"/><use href="#cg" x="1562" y="133"/>
<path d="M1556 157L1560 152 1564 157Z" fill="#9ea3af"/><path d="M1556 1045L1560 1050 1564 1045Z" fill="#9ea3af"/>
<path d="M1258 1060L1253 1065 1258 1070ZM1541 1060L1546 1065 1541 1070Z" fill="#8a8f9e"/>

<use href="#ex" x="1292" y="155"/><rect x="1310" y="149" width="13" height="12" fill="#eef1fa" stroke="#333"/><rect x="1310" y="149" width="13" height="3" fill="#333"/>
<use href="#ex" x="1274" y="173"/><path d="M1294 167H1303V179H1296" fill="none" stroke="#555" stroke-dasharray="1.500 1"/><path d="M1294 170L1299 172" stroke="#1b7fc4" stroke-width="2"/><circle cx="1301" cy="176" r="2" fill="none" stroke="#444"/>
<use href="#ex" x="1274" y="191"/><use href="#fo" x="1300" y="191"/><path d="M1297 190H1301L1299 194V197" stroke="#333" fill="none"/>
<use href="#ex" x="1274" y="209"/><circle cx="1299" cy="209" r="6.500" fill="none" stroke="#333"/><path d="M1292.500 209H1305.500M1299 202.500V215.500" stroke="#333"/><ellipse cx="1299" cy="209" rx="3" ry="6.500" fill="none" stroke="#333"/>
<use href="#ex" x="1274" y="227"/><use href="#fd" x="1299" y="227"/>
<use href="#ed" x="1275" y="245"/><use href="#fop" x="1299" y="245"/>
<use href="#fl" x="1317" y="263"/>
<use href="#ex" x="1292" y="281"/><use href="#ex" x="1292" y="299"/><use href="#ex" x="1292" y="317"/><use href="#ex" x="1292" y="335"/><use href="#ex" x="1292" y="353"/>
<use href="#ed" x="1275" y="371"/><use href="#fop" x="1299" y="371"/>
<use href="#ex" x="1292" y="389"/><use href="#ed" x="1293" y="407"/>
<use href="#ex" x="1310" y="425"/><use href="#cl" x="1334" y="424"/>
<use href="#ed" x="1275" y="443"/><use href="#fop" x="1299" y="443"/>
<use href="#ex" x="1292" y="461"/>
<use href="#ex" x="1274" y="479"/><use href="#fd" x="1299" y="479"/>
<use href="#ex" x="1274" y="497"/><use href="#fo" x="1300" y="497"/>
<use href="#fl" x="1299" y="515"/><use href="#fl" x="1299" y="533"/>
<use href="#ex" x="1274" y="551"/><path d="M1296 555V546H1304M1302 546V557H1298" fill="none" stroke="#333"/><circle cx="1295" cy="555" r="2" fill="none" stroke="#333"/>
<path d="M1295 563H1301L1304 566V575H1295Z" fill="none" stroke="#333"/><path d="M1298 570H1301" stroke="#333"/>
<use href="#ex" x="1274" y="587"/>
<g font-family="Liberation Sans" font-weight="bold" font-size="9.5" fill="#00539c">
<text x="1311" y="285">VB</text><text x="1311" y="303">VB</text><text x="1311" y="321">VB</text><text x="1311" y="339">VB</text><text x="1311" y="357">VB</text><text x="1311" y="393">VB</text><text x="1311" y="411">VB</text><text x="1311" y="465">VB</text><text x="1293" y="591">VB</text>
</g>
<rect x="1293" y="1032" width="13" height="12" fill="none" stroke="#333"/><rect x="1293" y="1032" width="13" height="3" fill="#333"/><rect x="1301" y="1038" width="5" height="5" fill="#fff" stroke="#1b7fc4"/>
<path d="M1520 1089H1526L1523 1092Z" fill="#8a93ad"/><use href="#pin" x="1540" y="1091"/><use href="#xx" x="1557" y="1091"/><use href="#cd" x="1561" y="1114"/>

<!-- status icons -->
<path d="M9 1156L12 1143H21L18 1156Z" fill="none" stroke="#fff" stroke-width="1.200"/>
<path d="M1259 1156V1146M1255 1150L1259 1145 1263 1150" stroke="#e8e8e8" stroke-width="2" fill="none"/>
<path d="M1305 1156L1308 1150 1314 1144 1316 1146 1310 1152Z" fill="#e8e8e8"/>
<path d="M1359 1141L1367 1149 1359 1157 1351 1149Z" fill="#e8e8e8"/><path d="M1357 1145L1362 1150M1359 1149V1153" stroke="#a34a3f"/>
<path d="M1471 1143L1477 1150 1483 1143M1477 1150V1156" stroke="#e8e8e8" stroke-width="2.500" fill="none"/>
<path d="M1533 1151L1537 1147 1541 1151Z" fill="#e8e8e8"/>
<path d="M1569 1153C1571 1150 1570 1143 1575 1143 1580 1143 1579 1150 1581 1153ZM1573 1155H1577V1157H1573Z" fill="#e8e8e8"/>
</svg>

<!-- Activate watermark -->
<div class="t" style="left:1295px;top:1061px;font:20px/24px 'Liberation Sans',sans-serif;color:rgba(135,140,150,.55)">Activate Windows</div>
<div class="t" style="left:1295px;top:1087px;font:15.2px/18px 'Liberation Sans',sans-serif;color:rgba(135,140,150,.75)">Go to Settings to activate Windows.</div>

<!-- Immediate window -->
<div class="a" style="left:523px;top:598px;width:910px;height:427px;background:#e6e7e8;border:1px solid #1c3f8f;box-sizing:border-box;box-shadow:0 0 7px rgba(0,0,0,.3)">
  <div class="a" style="left:0;top:0;width:908px;height:21px;background:#f5cc84"></div>
  <div class="t" style="left:4px;top:3px">Immediate Window</div>
  <div class="a" style="left:361px;top:308px;width:259px;height:17px;background:#8c96b8"></div>
  <div class="clip" style="left:2px;top:20px;width:890px;height:389px">
<pre style="position:absolute;left:0;top:0;margin:0;font:11.670px/16px 'Liberation Mono',monospace;color:#1e1e1e">Microsoft.AspNetCore.Hosting.Diagnostics: Information: Request starting HTTP/1.1 GET http://localhost:62555/test
Microsoft.AspNetCore.Mvc.Infrastructure.ControllerActionInvoker: Information: Route matched with {action = "Index", controller
AuditAttribute: Information: OnResourceExecuting - 2/13/2020 12:00:29 AM, Headers=Accept=text/html,application/xhtml+xml,applic
Step into: Stepping over property 'CoreLinux.InMemoryDBContext.get_GraphHoperKeys'. To step into properties or operators, go to
Exception thrown: 'System.InvalidOperationException' in Microsoft.EntityFrameworkCore.dll
Microsoft.AspNetCore.DataProtection.KeyManagement.XmlKeyManager: Information: User profile is available. Using 'C:\Users\khark\
Microsoft.Hosting.Lifetime: Information: Application started. Press Ctrl+C to shut down.
Microsoft.Hosting.Lifetime: Information: Hosting environment: Development
Microsoft.Hosting.Lifetime: Information: Content root path: E:\Projects\GraphHoper\CoreLinux
Microsoft.AspNetCore.Hosting.Diagnostics: Information: Request starting HTTP/1.1 GET http://localhost:62555/
Microsoft.AspNetCore.Routing.EndpointMiddleware: Information: Executing endpoint '/ HTTP: GET'
CoreLinux.Startup: Information: ContentRootPath=E:\Projects\GraphHoper\CoreLinux
Microsoft.AspNetCore.Routing.EndpointMiddleware: Information: Executed endpoint '/ HTTP: GET'
Microsoft.AspNetCore.Hosting.Diagnostics: Information: Request finished in 2179.1767ms 200
Microsoft.AspNetCore.Hosting.Diagnostics: Information: Request starting HTTP/1.1 GET http://localhost:62555/test
Microsoft.AspNetCore.Mvc.Infrastructure.ControllerActionInvoker: Information: Route matched with {action = "Index", controller
AuditAttribute: Information: OnResourceExecuting - 2/13/2020 12:21:32 AM, Headers=Accept=text/html,application/xhtml+xml,applic
Microsoft.EntityFrameworkCore.Infrastructure: Information: Entity Framework Core 3.1.3 initialized 'InMemoryDBContext' using pr
Microsoft.EntityFrameworkCore.Update: Information: Saved 38 entities to in-memory store.
? InMemoryDatabase.GraphHoperKeys.Count
2
? InMemoryDatabase.BotIps.Count
36
CoreLinux.TestController: Information: GraphHoperKeyCount=2, BotIp=36
Exception thrown: 'System.Reflection.TargetInvocationException' in System.Private.CoreLib.dll</pre>
  </div>
  <div class="a" style="left:894px;top:314px;width:12px;height:25px;background:#c0c3cc"></div>
  <div class="a" style="left:17px;top:415px;width:168px;height:8px;background:#c0c3cc"></div>
</div>

<!-- overlay: immediate icons, ellipse, cursor -->
<svg class="a" style="left:0;top:0" width="1600" height="1163" viewBox="0 0 1600 1163" xmlns="http://www.w3.org/2000/svg">
<path d="M1384 606H1393L1388.500 611Z" fill="#5a4a20"/>
<rect x="1402" y="604" width="8" height="8" fill="none" stroke="#333" stroke-width="1.200"/><path d="M1402 605.500H1410" stroke="#333" stroke-width="2"/>
<path d="M1418 604L1426 612M1426 604L1418 612" stroke="#333" stroke-width="1.300"/>
<path d="M1419 632L1423.500 627 1428 632Z" fill="#8a8f9e"/><path d="M1419 998L1423.500 1003 1428 998Z" fill="#8a8f9e"/>
<path d="M537 1014L532 1019 537 1024Z" fill="#8a8f9e"/><path d="M1402 1013L1407 1018 1402 1023Z" fill="#8a8f9e"/>
<path fill="#f00" fill-rule="evenodd" d="M809 912C809 888 900 873 1020 873 1140 873 1224 888 1224 910 1224 930 1130 947 1010 947 890 947 809 935 809 912ZM822 912C824 931 900 941 1010 941 1120 941 1206 928 1210 910 1212 893 1130 880 1020 880 905 880 820 893 822 912Z"/>
<path d="M939 922V938L943 934 946 940 949 939 946 933 952 933Z" fill="#fff" stroke="#222" stroke-width="1"/>
</svg>
</body>
</html>
